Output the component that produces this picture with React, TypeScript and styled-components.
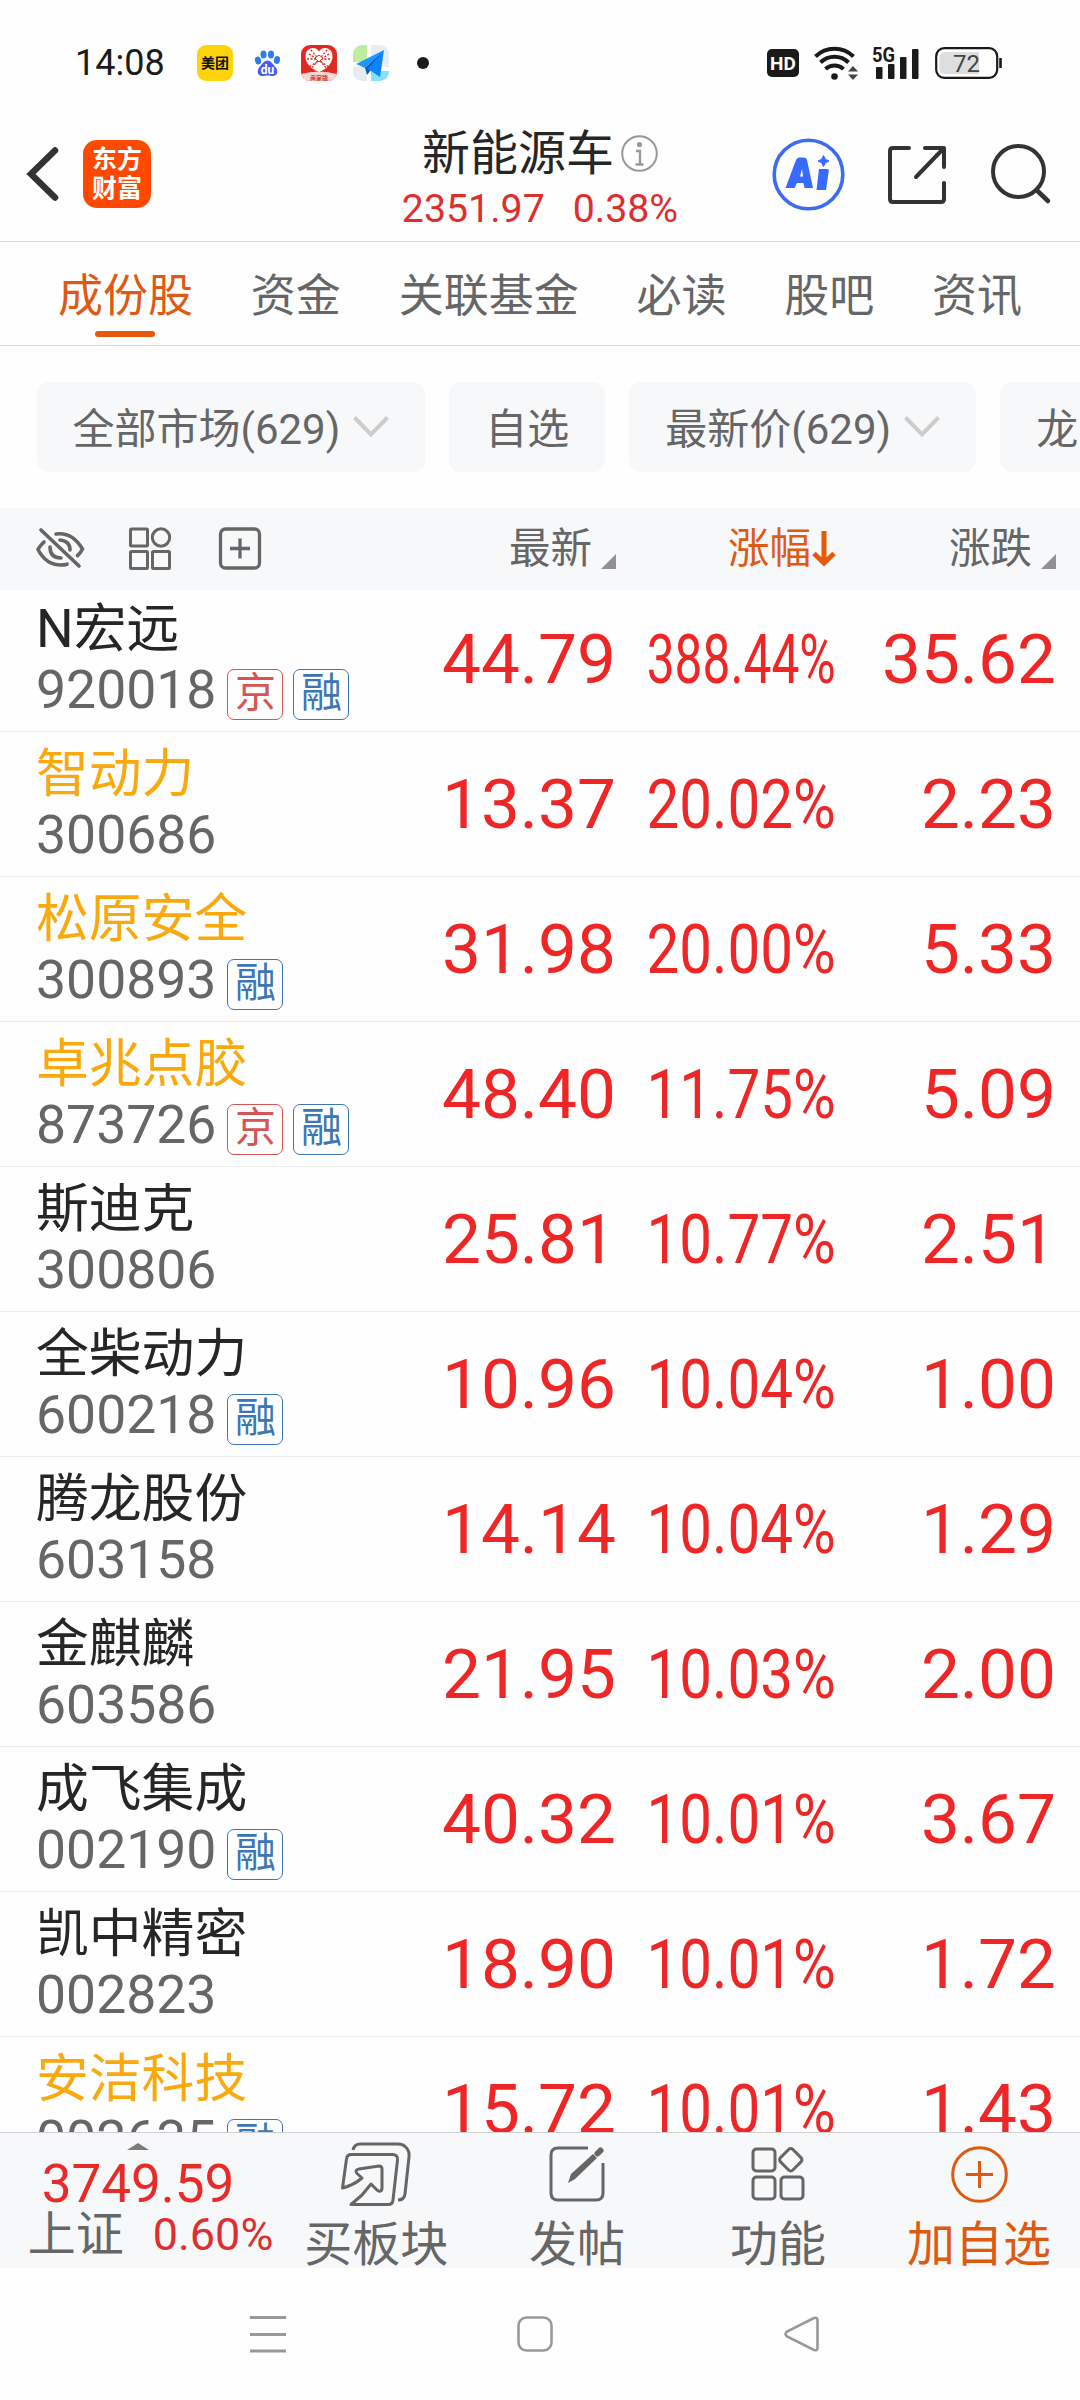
import React from 'react';
import styled, { createGlobalStyle } from 'styled-components';

const Global = createGlobalStyle`
  * { box-sizing: border-box; }
  html, body { margin: 0; padding: 0; background: #fefefe; }
  body { font-family: Roboto, "Noto Sans CJK SC", sans-serif; color: #262626; }
  svg { display: block; flex: none; overflow: visible; }
`;

const Screen = styled.main`
  width: 1080px;
  height: 2400px;
  display: flex;
  flex-direction: column;
  overflow: hidden;
  background: #fefefe;
  white-space: nowrap;
`;

const StatusBar = styled.div`
  height: 100px;
  flex: none;
  display: flex;
  align-items: center;
  padding: 25px 78px 0 75px;
`;

const Clock = styled.span`
  width: 122px;
  font-size: 36px;
  line-height: 36px;
  color: #1a1a1a;
`;

const AppIcons = styled.div`
  display: flex;
  align-items: center;
  gap: 16px;
`;

const AppTile = styled.div<{ $bg: string }>`
  width: 36px;
  height: 36px;
  border-radius: 9px;
  background: ${(p) => p.$bg};
  display: flex;
  flex-direction: column;
  align-items: center;
  justify-content: center;
  overflow: hidden;
`;

const TileText = styled.span`
  font-size: 14px;
  line-height: 16px;
  font-weight: 700;
  color: #111;
`;

const Dot = styled.i`
  width: 12px;
  height: 12px;
  border-radius: 50%;
  background: #1a1a1a;
  margin-left: 12px;
`;

const StatusRight = styled.div`
  margin-left: auto;
  display: flex;
  align-items: center;
`;

const HdBadge = styled.span`
  width: 32px;
  height: 28px;
  border-radius: 5px;
  background: #1a1a1a;
  color: #fff;
  font-size: 19px;
  font-weight: 700;
  line-height: 29px;
  text-align: center;
  margin-right: 15px;
`;

const Header = styled.header`
  height: 142px;
  flex: none;
  display: grid;
  grid-template-columns: 360px 1fr 360px;
  border-bottom: 1px solid #d9d9d9;
`;

const HeaderLeft = styled.div`
  display: flex;
  align-items: flex-start;
  padding: 40px 0 0 26px;
  gap: 24px;
`;

const Logo = styled.div`
  width: 68px;
  height: 68px;
  border-radius: 14px;
  background: #ff4800;
  color: #fff;
  font-size: 25px;
  line-height: 29px;
  font-weight: 700;
  display: flex;
  flex-direction: column;
  align-items: center;
  justify-content: center;
`;

const HeaderCenter = styled.div`
  display: flex;
  flex-direction: column;
  align-items: center;
  padding-top: 25px;
`;

const TitleLine = styled.div`
  display: flex;
  align-items: center;
  gap: 7px;
`;

const Title = styled.h1`
  margin: 0;
  padding-top: 2px;
  font-size: 48px;
  line-height: 54px;
  font-weight: 400;
`;

const IndexLine = styled.div`
  display: flex;
  gap: 28px;
  margin-top: 6px;
  font-size: 39.3px;
  line-height: 44px;
  color: #dc2f2e;
`;

const HeaderRight = styled.div`
  display: flex;
  align-items: flex-start;
  padding: 38px 0 0 52px;
`;

const Tabs = styled.nav`
  height: 104px;
  flex: none;
  display: flex;
  padding: 23px 0 0 58px;
  gap: 57.800px;
  border-bottom: 1px solid #d9d9d9;
`;

const Tab = styled.div<{ $active?: boolean }>`
  display: flex;
  flex-direction: column;
  align-items: center;
  font-size: 45px;
  line-height: 64px;
  color: ${(p) => (p.$active ? '#dd5a12' : '#666')};
  &::after {
    content: '';
    width: 60px;
    height: 6px;
    margin-top: 2px;
    margin-right: 1px;
    border-radius: 3px;
    background: ${(p) => (p.$active ? '#e4590a' : 'transparent')};
  }
`;

const Filters = styled.div`
  flex: none;
  display: flex;
  gap: 24px;
  padding: 36px 0 36px 36.500px;
  overflow: hidden;
`;

const Chip = styled.div`
  flex: none;
  height: 90px;
  padding: 0 36px 3px;
  border-radius: 12px;
  background: #f7f8fa;
  display: flex;
  align-items: center;
  gap: 13px;
  font-size: 42px;
  color: #666;
  svg { margin-top: 2px; }
`;

const TableHead = styled.div`
  height: 82px;
  flex: none;
  display: grid;
  grid-template-columns: 360px 256px 220px 220px;
  align-items: center;
  background: #f7f8fa;
  position: relative;
  z-index: 1;
`;

const Tools = styled.div`
  display: flex;
  align-items: center;
  padding-left: 36px;
`;

const HeadCell = styled.div<{ $active?: boolean }>`
  display: flex;
  justify-content: flex-end;
  align-items: center;
  font-size: 41.5px;
  line-height: 60px;
  color: ${(p) => (p.$active ? '#dd5a12' : '#666')};
`;

const SortMark = styled.i`
  width: 15px;
  height: 15px;
  margin: 25px 0 0 9px;
  background: #909096;
  clip-path: polygon(100% 0, 100% 100%, 0 100%);
`;

const List = styled.section`
  flex: 1;
  min-height: 0;
  margin-top: -3px;
  overflow: hidden;
`;

const Row = styled.div`
  height: 145px;
  display: grid;
  grid-template-columns: 360px 256px 220px 220px;
  align-items: center;
  border-bottom: 1px solid #ececec;
`;

const Stock = styled.div`
  padding-left: 36px;
  height: 144px;
`;

const Name = styled.div<{ $held?: boolean }>`
  margin-top: 10px;
  font-size: 52.8px;
  line-height: 64px;
  color: ${(p) => (p.$held ? '#f9a90e' : '#262626')};
`;

const CodeLine = styled.div`
  display: flex;
  align-items: center;
  gap: 10px;
  height: 60px;
  margin-top: -1px;
  font-size: 53.5px;
  line-height: 60px;
  color: #666;
`;

const Badge = styled.span<{ $tone: string }>`
  width: 56px;
  height: 51px;
  margin: 8px 0 0;
  border: 1.5px solid ${(p) => p.$tone};
  border-radius: 7px;
  color: ${(p) => p.$tone};
  font-size: 41px;
  line-height: 46px;
  text-align: center;
  position: relative;
  left: 1px;
`;

const Num = styled.div`
  padding-top: 2px;
  text-align: right;
  font-size: 69.3px;
  line-height: 80px;
  color: #ee2726;
`;

const Pct = styled(Num)<{ $squeeze: number }>`
  justify-self: end;
  transform: scaleX(${(p) => p.$squeeze});
  transform-origin: right center;
`;

const BottomBar = styled.footer`
  height: 136px;
  flex: none;
  display: grid;
  grid-template-columns: 276px 200.500px 201px 201px 201px;
  background: #f7f8fa;
  border-top: 1px solid #cfd0d3;
`;

const IndexBox = styled.div`
  display: flex;
  flex-direction: column;
  align-items: center;
  padding-top: 10px;
`;

const Caret = styled.i`
  width: 22px;
  height: 7px;
  background: #7b7b7b;
  clip-path: polygon(50% 0, 100% 100%, 0 100%);
`;

const IndexValue = styled.div`
  font-size: 53px;
  line-height: 56px;
  margin-top: 6px;
  color: #e82a29;
`;

const IndexName = styled.div`
  display: flex;
  align-items: center;
  gap: 29px;
  margin: -5px 0 0 25px;
  font-size: 48px;
  line-height: 56px;
  color: #666;
`;

const IndexPct = styled.span`
  font-size: 45px;
  color: #dc2f2e;
`;

const Action = styled.div<{ $accent?: boolean }>`
  display: flex;
  flex-direction: column;
  align-items: center;
  padding-top: 9px;
  font-size: 48px;
  line-height: 56px;
  color: ${(p) => (p.$accent ? '#dd5a12' : '#666')};
`;

const IconSlot = styled.div`
  height: 64px;
  display: flex;
  align-items: center;
`;

const ActionLabel = styled.span`
  margin-top: 11px;
`;

const SystemNav = styled.div`
  height: 132px;
  flex: none;
  display: flex;
  align-items: flex-start;
  justify-content: space-between;
  padding: 48px 261px 0 250px;
`;

const BaiduIcon = () => (
  <svg width="36" height="36" viewBox="0 0 36 36">
    <g fill="#2f7af0">
      <ellipse cx="9" cy="15.500" rx="3" ry="4" transform="rotate(-15 9 15.500)" />
      <ellipse cx="14.500" cy="9.500" rx="3" ry="4" />
      <ellipse cx="22" cy="9.500" rx="3" ry="4" />
      <ellipse cx="28" cy="15" rx="3" ry="4" transform="rotate(15 28 15)" />
    </g>
    <path d="M18.500 15.500c3.500 0 5 3.500 7.500 6 4 4 2.500 9.500-2 9.500-2 0-3.500-.5-5.500-.5s-3.500.5-5.500.5c-4.500 0-6-5.500-2-9.500 2.500-2.500 4-6 7.500-6z" fill="#4a5cea" />
    <text x="18.500" y="29" fontSize="12" fontWeight="700" fill="#fff" textAnchor="middle">du</text>
  </svg>
);

const ShopIcon = () => (
  <svg width="36" height="36" viewBox="0 0 36 36">
    <path d="M18 27C10 24 4.500 18 4.500 11.500c0-9 10-11 13.500-5 3.500-6 13.500-4 13.500 5C31.500 18 26 24 18 27z" fill="#fff" />
    <path d="M8 9l20 13M28 9L8 22M6 14h24M10 5l16 19M26 5L10 24" stroke="#e02b20" strokeWidth="1.300" strokeDasharray="2 1.500" />
    <path d="M14 13l4-3 4 3-4 4z" fill="#fff" stroke="#e02b20" strokeWidth="1" />
    <path d="M0 29q18-5 36 0v7H0z" fill="#fbd8d2" />
    <text x="18" y="34.500" fontSize="6" fontWeight="700" fill="#c33" textAnchor="middle">商家版</text>
  </svg>
);

const MapIcon = () => (
  <svg width="36" height="36" viewBox="0 0 36 36">
    <path d="M0 0h14v17H0z" fill="#bdeea0" />
    <path d="M18 0h18v22H18z" fill="#e6eef0" />
    <path d="M0 22h14v14H0z" fill="#e3ecf2" />
    <path d="M18 26h18v10H18z" fill="#83e3fb" />
    <path d="M31 5L3 19l9 4z" fill="#1d96ff" />
    <path d="M31 5L12 23l2 7 4-5z" fill="#0a5fd0" />
    <path d="M31 5L15 24l12 8z" fill="#0c84fb" />
  </svg>
);

const WifiIcon = () => (
  <svg width="44" height="34" viewBox="0 0 44 34" style={{ marginRight: 14 }}>
    <g fill="none" stroke="#1a1a1a" strokeWidth="4">
      <path d="M1.500 10.500a27 27 0 0 1 38 0" />
      <path d="M6.500 16.500a20 20 0 0 1 28 0" />
      <path d="M11.500 23a13.500 13.500 0 0 1 18 0" />
    </g>
    <circle cx="20.500" cy="30.500" r="3.300" fill="#1a1a1a" />
    <path d="M39 20l5 5.500H34zM39 34l5-5.500H34z" fill="#444" />
  </svg>
);

const SignalIcon = () => (
  <svg width="48" height="34" viewBox="0 0 48 34" style={{ marginRight: 15 }}>
    <text x="0" y="15.500" fontSize="20" fontWeight="700" fill="#1a1a1a" textLength="23" lengthAdjust="spacingAndGlyphs">5G</text>
    <g fill="#1a1a1a">
      <rect x="4" y="21" width="6.500" height="12" rx="1" />
      <rect x="16" y="18" width="6.500" height="15" rx="1" />
      <rect x="28" y="11" width="6.500" height="22" rx="1" />
      <rect x="40" y="3" width="6.500" height="30" rx="1" />
    </g>
  </svg>
);

const BatteryIcon = () => (
  <svg width="67" height="32" viewBox="0 0 67 32">
    <rect x="1.200" y="1.200" width="61" height="29.600" rx="8" fill="#fff" stroke="#1a1a1a" strokeWidth="2.200" />
    <path d="M10 5h34v22H10a5.500 5.500 0 0 1-5.500-5.500v-11A5.500 5.500 0 0 1 10 5z" fill="#dedede" />
    <path d="M65.500 11v10" stroke="#1a1a1a" strokeWidth="2.600" />
    <text x="31.500" y="24.500" fontSize="24" fill="#444" textAnchor="middle">72</text>
  </svg>
);

const Chevron = () => (
  <svg width="36" height="21" viewBox="0 0 36 21">
    <path d="M1.500 1.500L18 18.500 34.500 1.500" fill="none" stroke="#ccc" strokeWidth="4" />
  </svg>
);

const BuyIcon = () => (
  <svg width="70" height="64" viewBox="0 0 70 64" fill="none" stroke="#666" strokeWidth="3" strokeLinejoin="round">
    <path d="M12 8c1-4 3-6 7-6h38c7 0 12 6 11 13l-4 37c-.5 4-3 6-7 6" />
    <path d="M1.500 46L5.500 17c.3-3 2-4.500 5-4.500h41c3.500 0 5.500 2 5 5.500l-4.500 40c-.3 3-2 4.500-5 4.500H10l11-9.500 9-11 6 6c2 2 5 1.500 5-2V27c0-2-1-3-3-3l-20 3c-3 .5-4 2.500-2 4.500l5 4.500q-8 7-19.500 10z" />
  </svg>
);

const PostIcon = () => (
  <svg width="56" height="56" viewBox="0 0 56 56" fill="none" stroke="#666" strokeWidth="3">
    <path d="M39 2H9C4.500 2 2 4.500 2 9v38c0 4.500 2.500 7 7 7h38c4.500 0 7-2.500 7-7V17" />
    <path d="M19 37l3-9L44 8l4 4-22 21z" fill="#666" stroke="none" />
    <path d="M48.500 7.500l3-3" strokeWidth="6" stroke="#666" strokeLinecap="round" />
  </svg>
);

const FunctionIcon = () => (
  <svg width="54" height="56" viewBox="0 0 54 56" fill="none" stroke="#666" strokeWidth="3">
    <rect x="2" y="3" width="22" height="22" rx="3.500" />
    <rect x="2" y="31" width="22" height="22" rx="3.500" />
    <rect x="30" y="31" width="22" height="22" rx="3.500" />
    <rect x="31" y="5" width="17.500" height="17.500" rx="3" transform="rotate(45 39.750 13.750)" />
  </svg>
);

const AddIcon = () => (
  <svg width="57" height="57" viewBox="0 0 57 57" fill="none" stroke="#dd5a12" strokeWidth="3">
    <circle cx="28.500" cy="28.500" r="26.800" />
    <path d="M28.500 15v27M15 28.500h27" />
  </svg>
);

type StockRow = { name: string; code: string; tags?: string; price: string; pct: string; diff: string; held?: boolean };

const stocks: StockRow[] = [
  { name: 'N宏远', code: '920018', tags: '京融', price: '44.79', pct: '388.44%', diff: '35.62' },
  { name: '智动力', code: '300686', price: '13.37', pct: '20.02%', diff: '2.23', held: true },
  { name: '松原安全', code: '300893', tags: '融', price: '31.98', pct: '20.00%', diff: '5.33', held: true },
  { name: '卓兆点胶', code: '873726', tags: '京融', price: '48.40', pct: '11.75%', diff: '5.09', held: true },
  { name: '斯迪克', code: '300806', price: '25.81', pct: '10.77%', diff: '2.51' },
  { name: '全柴动力', code: '600218', tags: '融', price: '10.96', pct: '10.04%', diff: '1.00' },
  { name: '腾龙股份', code: '603158', price: '14.14', pct: '10.04%', diff: '1.29' },
  { name: '金麒麟', code: '603586', price: '21.95', pct: '10.03%', diff: '2.00' },
  { name: '成飞集成', code: '002190', tags: '融', price: '40.32', pct: '10.01%', diff: '3.67' },
  { name: '凯中精密', code: '002823', price: '18.90', pct: '10.01%', diff: '1.72' },
  { name: '安洁科技', code: '002635', tags: '融', price: '15.72', pct: '10.01%', diff: '1.43', held: true },
];

export default function App() {
  return (
    <Screen>
      <Global />
      <StatusBar>
        <Clock>14:08</Clock>
        <AppIcons>
          <AppTile $bg="#ffd30a"><TileText>美团</TileText></AppTile>
          <AppTile $bg="transparent"><BaiduIcon /></AppTile>
          <AppTile $bg="#e02b20"><ShopIcon /></AppTile>
          <AppTile $bg="#fff"><MapIcon /></AppTile>
          <Dot />
        </AppIcons>
        <StatusRight>
          <HdBadge>HD</HdBadge>
          <WifiIcon />
          <SignalIcon />
          <BatteryIcon />
        </StatusRight>
      </StatusBar>

      <Header>
        <HeaderLeft>
          <svg width="33" height="68" viewBox="0 0 33 68">
            <path d="M29 10.500L5 34l24 23.500" fill="none" stroke="#333" strokeWidth="6.500" strokeLinecap="round" />
          </svg>
          <Logo><span>东方</span><span>财富</span></Logo>
        </HeaderLeft>
        <HeaderCenter>
          <TitleLine>
            <Title>新能源车</Title>
            <svg width="37" height="37" viewBox="0 0 37 37" fill="none" stroke="#999" strokeWidth="2">
              <circle cx="18.500" cy="18.500" r="17.300" />
              <circle cx="18.500" cy="9.500" r="2.600" fill="#999" stroke="none" />
              <path d="M15 16h4v13.500M14.500 29.500h8" strokeWidth="2.400" />
            </svg>
          </TitleLine>
          <IndexLine><span>2351.97</span><span>0.38%</span></IndexLine>
        </HeaderCenter>
        <HeaderRight>
          <svg width="73" height="73" viewBox="0 0 73 73" style={{ marginRight: 43 }}>
            <circle cx="36.500" cy="36.500" r="34.300" fill="none" stroke="#3c6cf0" strokeWidth="3.600" />
            <path d="M13.500 50L24 22q1-2.500 3.500-2.500h4.500q2.500 0 3 2.500l6 28h-8.500l-1-5h-6.500l-2.500 5zM28 38.500h3l-1-7.500z" fill="#376aff" fillRule="evenodd" />
            <path d="M47 31h8.500q1.500 0 1.300 1.500L54 52h-9.500z" fill="#376aff" />
            <path d="M51.500 17.500l1.800 3.700 3.700 1.800-3.700 1.800-1.800 3.700-1.800-3.700-3.700-1.800 3.700-1.800z" fill="#376aff" stroke="#376aff" strokeWidth="1" />
          </svg>
          <svg width="58" height="73" viewBox="0 0 58 73" fill="none" stroke="#333" strokeWidth="4" strokeLinecap="round" strokeLinejoin="round" style={{ marginRight: 45 }}>
            <path d="M21 10H5q-3 0-3 3v48q0 3 3 3h48q3 0 3-3V45" />
            <path d="M37 10h19v19M55 11L28 39" />
          </svg>
          <svg width="60" height="73" viewBox="0 0 60 73" fill="none" stroke="#333" strokeWidth="4" strokeLinecap="round">
            <circle cx="27.500" cy="33.500" r="25.500" />
            <path d="M45.500 52L57 63" strokeWidth="4.500" />
          </svg>
        </HeaderRight>
      </Header>

      <Tabs>
        {['成份股', '资金', '关联基金', '必读', '股吧', '资讯'].map((t, i) => (
          <Tab key={t} $active={i === 0}>{t}</Tab>
        ))}
      </Tabs>

      <Filters>
        <Chip>全部市场(629)<Chevron /></Chip>
        <Chip>自选</Chip>
        <Chip>最新价(629)<Chevron /></Chip>
        <Chip>龙虎榜</Chip>
      </Filters>

      <TableHead>
        <Tools>
          <svg width="48" height="42" viewBox="0 0 48 42" fill="none" stroke="#666" strokeWidth="3.600" strokeLinecap="round" style={{ marginRight: 45 }}>
            <path d="M5 2l38 36" />
            <path d="M8 14Q3 19 2 21.500 10 37 25 37q3 0 6-.800" />
            <path d="M20 6q16-2.500 26.500 15-2 4-5 6.500" />
            <path d="M14 19q0 11 11 11M24 12q10 1 10 10" />
          </svg>
          <svg width="42" height="42" viewBox="0 0 42 42" fill="none" stroke="#666" strokeWidth="3" style={{ marginRight: 48 }}>
            <rect x="1.500" y="1" width="17" height="17" rx="1" />
            <circle cx="32" cy="9.500" r="8.700" />
            <rect x="1.500" y="23.500" width="17" height="17" rx="1" />
            <rect x="23.500" y="23.500" width="17" height="17" rx="1" />
          </svg>
          <svg width="42" height="42" viewBox="0 0 42 42" fill="none" stroke="#666" strokeWidth="3.300">
            <rect x="1.500" y="1" width="39" height="39" rx="5" />
            <path d="M21 10.500v20M11 20.500h20" />
          </svg>
        </Tools>
        <HeadCell>最新<SortMark /></HeadCell>
        <HeadCell $active>
          涨幅
          <svg width="24" height="36" viewBox="0 0 24 36" style={{ marginLeft: 1 }}>
            <path d="M12 0v32M2 22.500L12 32l10-9.500" fill="none" stroke="#e4590a" strokeWidth="5" />
          </svg>
        </HeadCell>
        <HeadCell>涨跌<SortMark /></HeadCell>
      </TableHead>

      <List>
        {stocks.map((s) => (
          <Row key={s.code}>
            <Stock>
              <Name $held={s.held}>{s.name}</Name>
              <CodeLine>
                {s.code}
                {(s.tags ?? '').split('').map((t) => (
                  <Badge key={t} $tone={t === '京' ? '#d65552' : '#3b76b5'}>{t}</Badge>
                ))}
              </CodeLine>
            </Stock>
            <Num>{s.price}</Num>
            <Pct $squeeze={s.pct.length > 6 ? 0.717 : 0.842}>{s.pct}</Pct>
            <Num>{s.diff}</Num>
          </Row>
        ))}
      </List>

      <BottomBar>
        <IndexBox>
          <Caret />
          <IndexValue>3749.59</IndexValue>
          <IndexName>上证<IndexPct>0.60%</IndexPct></IndexName>
        </IndexBox>
        <Action><IconSlot><BuyIcon /></IconSlot><ActionLabel>买板块</ActionLabel></Action>
        <Action><IconSlot><PostIcon /></IconSlot><ActionLabel>发帖</ActionLabel></Action>
        <Action><IconSlot><FunctionIcon /></IconSlot><ActionLabel>功能</ActionLabel></Action>
        <Action $accent><IconSlot><AddIcon /></IconSlot><ActionLabel>加自选</ActionLabel></Action>
      </BottomBar>

      <SystemNav>
        <svg width="36" height="37" viewBox="0 0 36 37" stroke="#999" strokeWidth="3">
          <path d="M0 1.500h36M0 18.500h36M0 35h36" />
        </svg>
        <svg width="36" height="36" viewBox="0 0 36 36">
          <rect x="1.500" y="1.500" width="33" height="33" rx="8" fill="none" stroke="#999" strokeWidth="2.600" />
        </svg>
        <svg width="35" height="36" viewBox="0 0 35 36">
          <path d="M30 2L3 15.500q-3 2.500 0 5L30 34q3.500 1 3.500-2.500v-27Q33.500 1 30 2z" fill="none" stroke="#999" strokeWidth="2.600" />
        </svg>
      </SystemNav>
    </Screen>
  );
}
